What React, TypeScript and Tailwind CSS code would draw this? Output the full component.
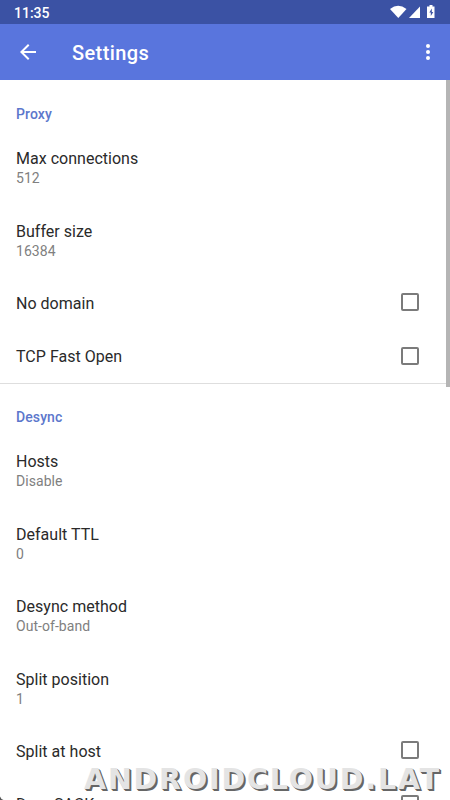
interface RowProps {
  title: string;
  summary?: string;
  checkbox?: boolean;
}

const proxy: RowProps[] = [
  { title: 'Max connections', summary: '512' },
  { title: 'Buffer size', summary: '16384' },
  { title: 'No domain', checkbox: true },
  { title: 'TCP Fast Open', checkbox: true },
];

const desync: RowProps[] = [
  { title: 'Hosts', summary: 'Disable' },
  { title: 'Default TTL', summary: '0' },
  { title: 'Desync method', summary: 'Out-of-band' },
  { title: 'Split position', summary: '1' },
  { title: 'Split at host', checkbox: true },
  { title: 'Drop SACK', checkbox: true },
];

function Row({ title, summary, checkbox }: RowProps) {
  return (
    <div
      className={`flex shrink-0 items-center justify-between pl-4 pr-[31px] ${
        summary ? 'h-[72.5px]' : 'h-[53.5px]'
      }`}
    >
      <div>
        <div className="text-base leading-[22px] tracking-[0.02px] text-[#2a2a2a]">{title}</div>
        {summary && (
          <div className="-mt-px mb-px text-sm leading-[18px] tracking-[0.05px] text-[#808080]">
            {summary}
          </div>
        )}
      </div>
      {checkbox && (
        <div className="mb-[3px] size-[18px] rounded-[2px] border-2 border-[#7b7b7b]" />
      )}
    </div>
  );
}

function Category({ title, rows }: { title: string; rows: RowProps[] }) {
  return (
    <section className="flex shrink-0 flex-col">
      <h2 className="h-[51px] shrink-0 pl-4 pt-[23px] text-sm font-medium leading-5 tracking-[0.1px] text-[#5c77cc]">
        {title}
      </h2>
      {rows.map((row) => (
        <Row key={row.title} {...row} />
      ))}
    </section>
  );
}

export default function App() {
  return (
    <div className="relative flex h-[800px] w-[450px] flex-col overflow-hidden bg-white font-['Roboto',sans-serif]">
      <div className="flex h-6 shrink-0 items-center justify-between bg-[#3b52a4] pl-[14px] pr-[14px] text-white">
        <span className="pt-[2px] text-sm font-medium">11:35</span>
        <svg className="h-6 w-[48px]" viewBox="0 0 48 24" fill="currentColor">
          <path d="M2 9Q10 2.500 18.500 9L10.300 18Z" />
          <path d="M32 6.500V18H21Z" />
          <path d="M41.500 5h3v1.500h2V18h-7.500V6.500h2.500Z" />
          <path d="M43.800 8.500l-2.500 4h1.500v3.500l2.500-4h-1.500Z" fill="#3b52a4" />
        </svg>
      </div>
      <header className="flex h-14 shrink-0 items-center bg-[#5975dd] pl-4 pr-[10px] text-white">
        <svg className="size-6" viewBox="0 0 24 24" fill="currentColor">
          <path d="M20 11H7.830l5.590-5.590L12 4l-8 8 8 8 1.410-1.410L7.830 13H20z" />
        </svg>
        <h1 className="ml-8 flex-1 pt-[2px] text-xl font-medium tracking-[0.4px]">Settings</h1>
        <svg className="size-6" viewBox="0 0 24 24" fill="currentColor">
          <circle cx="12" cy="6" r="2" />
          <circle cx="12" cy="12" r="2" />
          <circle cx="12" cy="18" r="2" />
        </svg>
      </header>
      <main className="flex min-h-0 flex-1 flex-col pt-px">
        <Category title="Proxy" rows={proxy} />
        <div className="-mt-px h-px shrink-0 bg-[#dedede]" />
        <Category title="Desync" rows={desync} />
      </main>
      <div className="absolute right-0 top-20 h-[307px] w-1 bg-[#b5b5b5]" />
      {/* rounded screen corner */}
      <svg className="absolute bottom-0 left-0 size-1" viewBox="0 0 4 4">
        <path d="M0 0.500Q0.800 3 3.500 4H0Z" fill="#555" />
      </svg>
      <div className="absolute left-[84px] top-[761px] whitespace-nowrap font-['DejaVu_Sans',sans-serif] text-[28.5px] font-bold leading-[38px] tracking-[1.85px] text-[#e4e4e4] [text-shadow:1px_1px_0_#666,2px_2px_0_#666]">
        ANDROIDCLOUD.LAT
      </div>
    </div>
  );
}
